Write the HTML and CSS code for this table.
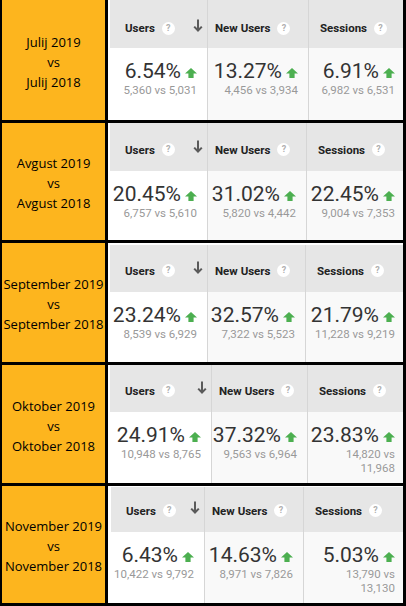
FILE: index.html
```html
<!DOCTYPE html>
<html lang="sl">
<head>
<meta charset="utf-8">
<title>GA primerjava</title>
<link rel="stylesheet" href="styles.css">
</head>
<body>
<div class="sheet">

  <div class="row r1">
    <div class="label">Julij 2019<br>vs<br>Julij 2018</div>
    <div class="card">
      <div class="col users">
        <div class="head"><span class="title">Users</span><span class="help">?</span><svg class="sort" viewBox="0 0 10 13" width="10" height="13"><path d="M5 0.5V11.5M1.2 7.6L5 11.5L8.8 7.6" fill="none" stroke="#5a5a5a" stroke-width="2"/></svg></div>
        <div class="body"><div class="pct">6.54%<svg class="up" viewBox="0 0 12 10" width="12" height="10"><polygon points="6,0 12,5.5 8.6,5.5 8.6,10 3.4,10 3.4,5.5 0,5.5" fill="#4caf50"/></svg></div><div class="cmp">5,360 vs 5,031</div></div>
      </div>
      <div class="col newu">
        <div class="head"><span class="title">New Users</span><span class="help">?</span></div>
        <div class="body"><div class="pct">13.27%<svg class="up" viewBox="0 0 12 10" width="12" height="10"><polygon points="6,0 12,5.5 8.6,5.5 8.6,10 3.4,10 3.4,5.5 0,5.5" fill="#4caf50"/></svg></div><div class="cmp">4,456 vs 3,934</div></div>
      </div>
      <div class="col sess">
        <div class="head"><span class="title">Sessions</span><span class="help">?</span></div>
        <div class="body"><div class="pct">6.91%<svg class="up" viewBox="0 0 12 10" width="12" height="10"><polygon points="6,0 12,5.5 8.6,5.5 8.6,10 3.4,10 3.4,5.5 0,5.5" fill="#4caf50"/></svg></div><div class="cmp">6,982 vs 6,531</div></div>
      </div>
    </div>
  </div>

  <div class="row r2">
    <div class="label">Avgust 2019<br>vs<br>Avgust 2018</div>
    <div class="card">
      <div class="col users">
        <div class="head"><span class="title">Users</span><span class="help">?</span><svg class="sort" viewBox="0 0 10 13" width="10" height="13"><path d="M5 0.5V11.5M1.2 7.6L5 11.5L8.8 7.6" fill="none" stroke="#5a5a5a" stroke-width="2"/></svg></div>
        <div class="body"><div class="pct">20.45%<svg class="up" viewBox="0 0 12 10" width="12" height="10"><polygon points="6,0 12,5.5 8.6,5.5 8.6,10 3.4,10 3.4,5.5 0,5.5" fill="#4caf50"/></svg></div><div class="cmp">6,757 vs 5,610</div></div>
      </div>
      <div class="col newu">
        <div class="head"><span class="title">New Users</span><span class="help">?</span></div>
        <div class="body"><div class="pct">31.02%<svg class="up" viewBox="0 0 12 10" width="12" height="10"><polygon points="6,0 12,5.5 8.6,5.5 8.6,10 3.4,10 3.4,5.5 0,5.5" fill="#4caf50"/></svg></div><div class="cmp">5,820 vs 4,442</div></div>
      </div>
      <div class="col sess">
        <div class="head"><span class="title">Sessions</span><span class="help">?</span></div>
        <div class="body"><div class="pct">22.45%<svg class="up" viewBox="0 0 12 10" width="12" height="10"><polygon points="6,0 12,5.5 8.6,5.5 8.6,10 3.4,10 3.4,5.5 0,5.5" fill="#4caf50"/></svg></div><div class="cmp">9,004 vs 7,353</div></div>
      </div>
    </div>
  </div>

  <div class="row r3">
    <div class="label">September 2019<br>vs<br>September 2018</div>
    <div class="card">
      <div class="col users">
        <div class="head"><span class="title">Users</span><span class="help">?</span><svg class="sort" viewBox="0 0 10 13" width="10" height="13"><path d="M5 0.5V11.5M1.2 7.6L5 11.5L8.8 7.6" fill="none" stroke="#5a5a5a" stroke-width="2"/></svg></div>
        <div class="body"><div class="pct">23.24%<svg class="up" viewBox="0 0 12 10" width="12" height="10"><polygon points="6,0 12,5.5 8.6,5.5 8.6,10 3.4,10 3.4,5.5 0,5.5" fill="#4caf50"/></svg></div><div class="cmp">8,539 vs 6,929</div></div>
      </div>
      <div class="col newu">
        <div class="head"><span class="title">New Users</span><span class="help">?</span></div>
        <div class="body"><div class="pct">32.57%<svg class="up" viewBox="0 0 12 10" width="12" height="10"><polygon points="6,0 12,5.5 8.6,5.5 8.6,10 3.4,10 3.4,5.5 0,5.5" fill="#4caf50"/></svg></div><div class="cmp">7,322 vs 5,523</div></div>
      </div>
      <div class="col sess">
        <div class="head"><span class="title">Sessions</span><span class="help">?</span></div>
        <div class="body"><div class="pct">21.79%<svg class="up" viewBox="0 0 12 10" width="12" height="10"><polygon points="6,0 12,5.5 8.6,5.5 8.6,10 3.4,10 3.4,5.5 0,5.5" fill="#4caf50"/></svg></div><div class="cmp">11,228 vs 9,219</div></div>
      </div>
    </div>
  </div>

  <div class="row r4">
    <div class="label">Oktober 2019<br>vs<br>Oktober 2018</div>
    <div class="card">
      <div class="col users">
        <div class="head"><span class="title">Users</span><span class="help">?</span><svg class="sort" viewBox="0 0 10 13" width="10" height="13"><path d="M5 0.5V11.5M1.2 7.6L5 11.5L8.8 7.6" fill="none" stroke="#5a5a5a" stroke-width="2"/></svg></div>
        <div class="body"><div class="pct">24.91%<svg class="up" viewBox="0 0 12 10" width="12" height="10"><polygon points="6,0 12,5.5 8.6,5.5 8.6,10 3.4,10 3.4,5.5 0,5.5" fill="#4caf50"/></svg></div><div class="cmp">10,948 vs 8,765</div></div>
      </div>
      <div class="col newu">
        <div class="head"><span class="title">New Users</span><span class="help">?</span></div>
        <div class="body"><div class="pct">37.32%<svg class="up" viewBox="0 0 12 10" width="12" height="10"><polygon points="6,0 12,5.5 8.6,5.5 8.6,10 3.4,10 3.4,5.5 0,5.5" fill="#4caf50"/></svg></div><div class="cmp">9,563 vs 6,964</div></div>
      </div>
      <div class="col sess">
        <div class="head"><span class="title">Sessions</span><span class="help">?</span></div>
        <div class="body"><div class="pct">23.83%<svg class="up" viewBox="0 0 12 10" width="12" height="10"><polygon points="6,0 12,5.5 8.6,5.5 8.6,10 3.4,10 3.4,5.5 0,5.5" fill="#4caf50"/></svg></div><div class="cmp">14,820 vs<br>11,968</div></div>
      </div>
    </div>
  </div>

  <div class="row r5">
    <div class="label">November 2019<br>vs<br>November 2018</div>
    <div class="card">
      <div class="col users">
        <div class="head"><span class="title">Users</span><span class="help">?</span><svg class="sort" viewBox="0 0 10 13" width="10" height="13"><path d="M5 0.5V11.5M1.2 7.6L5 11.5L8.8 7.6" fill="none" stroke="#5a5a5a" stroke-width="2"/></svg></div>
        <div class="body"><div class="pct">6.43%<svg class="up" viewBox="0 0 12 10" width="12" height="10"><polygon points="6,0 12,5.5 8.6,5.5 8.6,10 3.4,10 3.4,5.5 0,5.5" fill="#4caf50"/></svg></div><div class="cmp">10,422 vs 9,792</div></div>
      </div>
      <div class="col newu">
        <div class="head"><span class="title">New Users</span><span class="help">?</span></div>
        <div class="body"><div class="pct">14.63%<svg class="up" viewBox="0 0 12 10" width="12" height="10"><polygon points="6,0 12,5.5 8.6,5.5 8.6,10 3.4,10 3.4,5.5 0,5.5" fill="#4caf50"/></svg></div><div class="cmp">8,971 vs 7,826</div></div>
      </div>
      <div class="col sess">
        <div class="head"><span class="title">Sessions</span><span class="help">?</span></div>
        <div class="body"><div class="pct">5.03%<svg class="up" viewBox="0 0 12 10" width="12" height="10"><polygon points="6,0 12,5.5 8.6,5.5 8.6,10 3.4,10 3.4,5.5 0,5.5" fill="#4caf50"/></svg></div><div class="cmp">13,790 vs<br>13,130</div></div>
      </div>
    </div>
  </div>

</div>
</body>
</html>
```

FILE: styles.css
```css
* {
  box-sizing: border-box;
  margin: 0;
  padding: 0;
}

html,
body {
  background: #000;
}

body {
  width: 406px;
  height: 606px;
  overflow: hidden;
}

.sheet {
  display: grid;
  grid-template-rows: 120px 117px 119px 118px 117px;
  row-gap: 3px;
  padding: 0 3px 3px 2px;
  background: #000;
}

.row {
  display: grid;
  grid-template-columns: 103px 295px;
  column-gap: 3px;
  min-height: 0;
}

.label {
  background: #fdb51e;
  color: #000;
  font-family: "Open Sans", "DejaVu Sans", sans-serif;
  font-size: 13px;
  line-height: 20px;
  text-align: center;
  display: flex;
  align-items: center;
  justify-content: center;
  padding-top: 3px;
  white-space: nowrap;
}

.card {
  background: #fff;
  display: grid;
  padding-left: 2px;
  overflow: hidden;
}

.r1 .card { grid-template-columns: 97px 101px 95px; }
.r2 .card { grid-template-columns: 97px 99px 97px; }
.r3 .card { grid-template-columns: 97px 98px 98px; padding-top: 2px; }
.r4 .card { grid-template-columns: 101px 96px 96px; }
.r5 .card { grid-template-columns: 93px 99px 100px; padding-left: 3px; padding-top: 1px; }

.col {
  display: flex;
  flex-direction: column;
  min-width: 0;
}

.newu,
.sess {
  border-left: 1px solid #d6d6d6;
}

.head {
  flex: none;
  height: 48px;
  padding-top: 5px;
  background: #e6e6e6;
  display: flex;
  align-items: center;
  font-family: Roboto, "Liberation Sans", sans-serif;
}

.r1 .head { padding-top: 8px; }
.r3 .head,
.r4 .head { height: 47px; padding-top: 4px; }
.r5 .head { height: 45px; padding-top: 2px; }

.users .head { padding-left: 15px; padding-right: 4px; }
.newu .head { padding-left: 7px; }
.sess .head { padding-left: 11px; }

.title {
  font-size: 11.5px;
  font-weight: 700;
  color: #222;
  white-space: nowrap;
}

.help {
  width: 13px;
  height: 13px;
  margin-left: 7px;
  border-radius: 50%;
  background: #fff;
  color: #b0b0b0;
  font-size: 9px;
  font-weight: 700;
  line-height: 13px;
  text-align: center;
}

.sort {
  margin-left: auto;
  margin-bottom: 6px;
  display: block;
}

.body {
  flex: 1;
  background: #f9f9f9;
  text-align: right;
  padding: 11px 10px 0 0;
  font-family: Roboto, "Liberation Sans", sans-serif;
}

.users .body {
  background: #fff;
}

.sess .body {
  padding-right: 8px;
}

.pct {
  font-size: 21px;
  line-height: 24px;
  color: #333;
  white-space: nowrap;
}

.up {
  margin-left: 4px;
  vertical-align: baseline;
}

.cmp {
  font-size: 11.5px;
  line-height: 14px;
  color: #999;
}
```
